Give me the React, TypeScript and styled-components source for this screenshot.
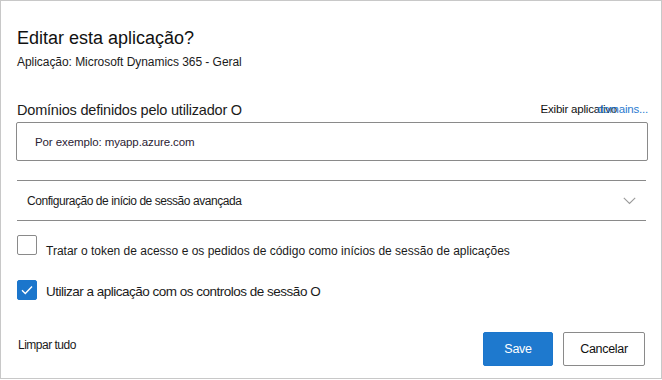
import React from "react";
import styled, { createGlobalStyle } from "styled-components";

const GlobalStyle = createGlobalStyle`
  html, body { margin: 0; padding: 0; background: #ffffff; }
  body { font-family: "Liberation Sans", Arial, sans-serif; color: #1b1b1b; }
  * { box-sizing: border-box; }
`;

const Dialog = styled.div`
  display: flex;
  flex-direction: column;
  width: 662px;
  height: 379px;
  border: 1px solid #c8c8c8;
  padding: 0 13px 12px 15px;
  background: #ffffff;
`;

const Title = styled.h1`
  margin: 25px 0 0 1px;
  font-size: 18px;
  line-height: 24px;
  font-weight: 400;
  color: #111111;
`;

const Subtitle = styled.div`
  margin: 4px 0 0 1px;
  font-size: 12px;
  line-height: 16px;
  color: #1b1b1b;
  letter-spacing: -0.05px;
`;

const FieldHeader = styled.div`
  display: flex;
  align-items: center;
  justify-content: space-between;
  margin-top: 30px;
  height: 20px;
`;

const FieldLabel = styled.span`
  margin-left: 1px;
  font-size: 14.5px;
  letter-spacing: -0.2px;
  color: #1b1b1b;
`;

const Overlap = styled.div`
  display: grid;
  margin-top: -3px;
  font-size: 11.5px;
  letter-spacing: -0.2px;
  & > * { grid-area: 1 / 1; justify-self: end; }
`;

const PlainText = styled.span<{ $shift: number }>`
  color: #111111;
  margin-right: ${(p) => p.$shift}px;
  white-space: nowrap;
`;

const LinkText = styled.a`
  color: #2b7bd0;
  text-decoration: none;
  white-space: nowrap;
`;

const TextInput = styled.input`
  margin-top: 2px;
  height: 39px;
  width: 100%;
  border: 1px solid #8a8a8a;
  border-radius: 2px;
  padding: 0 0 0 18px;
  font-family: inherit;
  font-size: 11.5px;
  letter-spacing: -0.1px;
  outline: none;
  &::placeholder { color: #2a2233; opacity: 1; }
`;

const Accordion = styled.div`
  margin: 19px 2px 0 1px;
  height: 41px;
  border-top: 1px solid #8a8a8a;
  border-bottom: 1px solid #8a8a8a;
  display: flex;
  align-items: center;
  justify-content: space-between;
  padding: 0 10px 0 10px;
`;

const AccordionText = styled.span`
  font-size: 12px;
  letter-spacing: -0.45px;
  color: #1b1b1b;
`;

const Options = styled.div`
  display: flex;
  flex-direction: column;
  gap: 22px;
  margin-top: 14px;
  margin-left: 1px;
`;

const OptionRow = styled.label`
  display: flex;
  align-items: flex-start;
  gap: 9px;
`;

const Box = styled.span<{ $checked: boolean }>`
  flex: none;
  width: 20px;
  height: 20px;
  border-radius: 2px;
  border: 1px solid ${(p) => (p.$checked ? "#1b76cc" : "#8a8a8a")};
  background: ${(p) => (p.$checked ? "#1b76cc" : "#ffffff")};
  display: flex;
  align-items: center;
  justify-content: center;
`;

const OptionText = styled.span<{ $large?: boolean }>`
  padding-top: ${(p) => (p.$large ? 4 : 10)}px;
  font-size: ${(p) => (p.$large ? 13.5 : 12)}px;
  line-height: ${(p) => (p.$large ? 16 : 13)}px;
  letter-spacing: ${(p) => (p.$large ? -0.5 : 0)}px;
  color: #1b1b1b;
`;

const Footer = styled.div`
  margin-top: auto;
  display: flex;
  align-items: center;
  justify-content: space-between;
  margin-right: 3px;
`;

const ClearLink = styled.span`
  margin: 0 0 8px 2px;
  font-size: 12px;
  letter-spacing: -0.5px;
  color: #1b1b1b;
`;

const Buttons = styled.div`
  display: flex;
  gap: 10px;
`;

const Button = styled.button<{ $primary?: boolean; $w: number }>`
  width: ${(p) => p.$w}px;
  height: 34px;
  border-radius: 2px;
  font-family: inherit;
  font-size: 12.5px;
  letter-spacing: -0.3px;
  cursor: pointer;
  border: 1px solid ${(p) => (p.$primary ? "#1b76cc" : "#8a8a8a")};
  background: ${(p) => (p.$primary ? "#1e79ce" : "#ffffff")};
  color: ${(p) => (p.$primary ? "#ffffff" : "#111111")};
  padding: 0;
`;

export default function App() {
  return (
    <>
      <GlobalStyle />
      <Dialog>
        <Title>Editar esta aplicação?</Title>
        <Subtitle>Aplicação: Microsoft Dynamics 365 - Geral</Subtitle>
        <FieldHeader>
          <FieldLabel>Domínios definidos pelo utilizador O</FieldLabel>
          <Overlap>
            <PlainText $shift={31}>Exibir aplicativo</PlainText>
            <LinkText href="#">domains...</LinkText>
          </Overlap>
        </FieldHeader>
        <TextInput placeholder="Por exemplo: myapp.azure.com" />
        <Accordion>
          <AccordionText>Configuração de início de sessão avançada</AccordionText>
          <svg width="13" height="8" viewBox="0 0 13 8" fill="none">
            <path d="M0.8 0.8 L6.5 6.5 L12.2 0.8" stroke="#9a9a9a" strokeWidth="1.1" />
          </svg>
        </Accordion>
        <Options>
          <OptionRow>
            <Box $checked={false} />
            <OptionText>
              Tratar o token de acesso e os pedidos de código como inícios de sessão de aplicações
            </OptionText>
          </OptionRow>
          <OptionRow>
            <Box $checked={true}>
              <svg width="12" height="10" viewBox="0 0 12 10" fill="none">
                <path d="M1 5.2 L4.3 8.4 L11 1.4" stroke="#ffffff" strokeWidth="1.4" />
              </svg>
            </Box>
            <OptionText $large>Utilizar a aplicação com os controlos de sessão O</OptionText>
          </OptionRow>
        </Options>
        <Footer>
          <ClearLink>Limpar tudo</ClearLink>
          <Buttons>
            <Button $primary $w={70}>Save</Button>
            <Button $w={82}>Cancelar</Button>
          </Buttons>
        </Footer>
      </Dialog>
    </>
  );
}
